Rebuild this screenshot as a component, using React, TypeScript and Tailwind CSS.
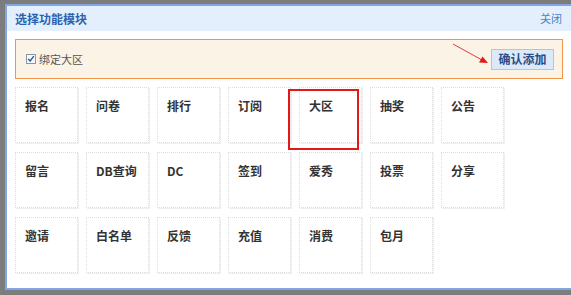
import React from "react";

const MODULES = [
  ["报名", "问卷", "排行", "订阅", "大区", "抽奖", "公告"],
  ["留言", "DB查询", "DC", "签到", "爱秀", "投票", "分享"],
  ["邀请", "白名单", "反馈", "充值", "消费", "包月"],
];

const FONT = { fontFamily: '"Noto Sans CJK SC", "Liberation Sans", sans-serif' };

export default function App() {
  return (
    <div
      className="relative w-[571px] h-[295px] overflow-hidden bg-[#7c7c7c] pt-[4px] pl-[5px] pb-[5px]"
      style={FONT}
    >
      <div className="flex flex-col h-full border-l-2 border-t-2 border-b-2 border-[#82a6e4] bg-white">
        <div className="flex items-center justify-between h-[25px] bg-[#e4effd] pl-[8px] pr-[9px]">
          <span className="text-[12px] font-semibold text-[#2b62ae]">选择功能模块</span>
          <span className="text-[11px] text-[#4c7fc4]">关闭</span>
        </div>

        <div className="pl-[8px] pt-[8px]">
          <div className="flex items-center justify-between w-[548px] h-[40px] border border-[#f49448] bg-[#fbf4e6] pl-[10px] pr-[8px]">
            <label className="flex items-center gap-[3px] text-[11px] text-[#555]">
              <span className="flex items-center justify-center w-[10px] h-[10px] border border-[#8d96a4] bg-[#f4f6fa]">
                <svg viewBox="0 0 10 10" className="w-[8px] h-[8px]">
                  <path d="M1.5 5 L4 7.5 L8.5 1.5" fill="none" stroke="#2c4f9a" strokeWidth="1.6" />
                </svg>
              </span>
              绑定大区
            </label>
            <button className="w-[63px] h-[21px] border border-[#a9c6ee] bg-[#dbe9fb] text-[12px] font-bold text-[#284d86]">
              确认添加
            </button>
          </div>

          <div className="grid grid-cols-[repeat(7,63px)] auto-rows-[56px] gap-x-[8px] gap-y-[9px] mt-[8px]">
            {MODULES.flat().map((name) => (
              <div
                key={name}
                className="border border-dotted border-[#dcdcdc] shadow-[1px_1px_0_#efefef] pl-[9px] pt-[9px] text-[12px] font-bold text-[#333]"
              >
                {name}
              </div>
            ))}
          </div>
        </div>
      </div>

      <div className="absolute left-[288px] top-[89px] w-[71px] h-[61px] border-2 border-[#e31818]" />

      <svg className="absolute left-[450px] top-[40px]" width="42" height="30" viewBox="0 0 42 30">
        <line x1="3" y1="4" x2="32" y2="20" stroke="#e83a3a" strokeWidth="1" />
        <polygon points="38,23 29,22.5 32.5,16.5" fill="#e01a1a" />
      </svg>
    </div>
  );
}
